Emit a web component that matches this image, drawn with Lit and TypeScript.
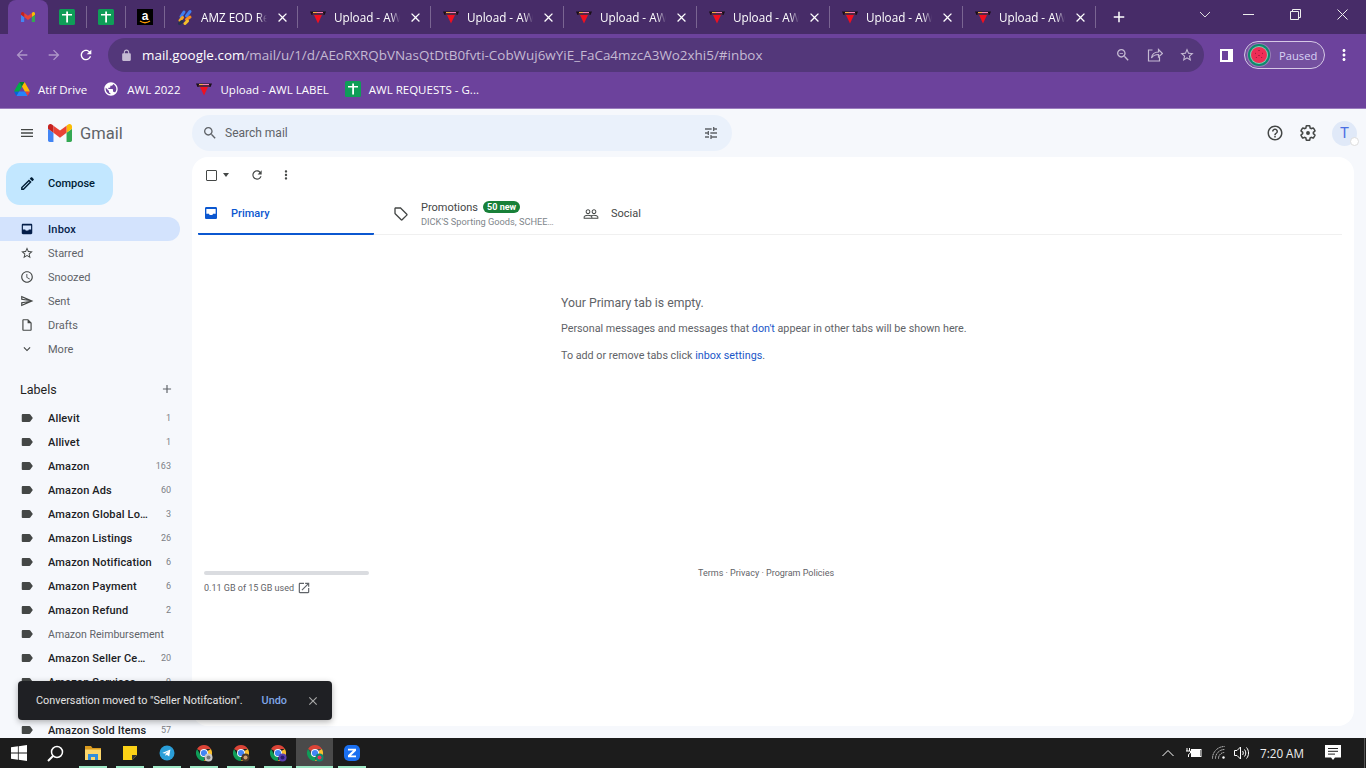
import { LitElement, html, css } from 'lit';
import { customElement } from 'lit/decorators.js';

const P = {
  back: 'M20 11H7.83l5.59-5.59L12 4l-8 8 8 8 1.41-1.41L7.83 13H20v-2z',
  forward: 'M12 4l-1.41 1.41L16.17 11H4v2h12.17l-5.58 5.59L12 20l8-8z',
  reload: 'M17.65 6.35C16.2 4.9 14.21 4 12 4c-4.42 0-7.99 3.58-7.99 8s3.57 8 7.99 8c3.73 0 6.84-2.55 7.73-6h-2.08c-.82 2.33-3.04 4-5.65 4-3.31 0-6-2.69-6-6s2.69-6 6-6c1.66 0 3.14.69 4.22 1.78L13 11h7V4l-2.35 2.35z',
  lock: 'M18 8h-1V6c0-2.76-2.24-5-5-5S7 3.24 7 6v2H6c-1.1 0-2 .9-2 2v10c0 1.1.9 2 2 2h12c1.1 0 2-.9 2-2V10c0-1.1-.9-2-2-2zM9 6c0-1.66 1.34-3 3-3s3 1.34 3 3v2H9V6z',
  close: 'M19 6.41L17.59 5 12 10.59 6.41 5 5 6.41 10.59 12 5 17.59 6.41 19 12 13.41 17.59 19 19 17.59 13.41 12z',
  add: 'M19 13h-6v6h-2v-6H5v-2h6V5h2v6h6v2z',
  star: 'M22 9.24l-7.19-.62L12 2 9.19 8.63 2 9.24l5.46 4.73L5.82 21 12 17.27 18.18 21l-1.63-7.03L22 9.24zM12 15.4l-3.76 2.27 1-4.28-3.32-2.88 4.38-.38L12 6.1l1.71 4.04 4.38.38-3.32 2.88 1 4.28L12 15.4z',
  globe: 'M12 2C6.48 2 2 6.48 2 12s4.48 10 10 10 10-4.48 10-10S17.52 2 12 2zm-1 17.93c-3.95-.49-7-3.85-7-7.93 0-.62.08-1.21.21-1.79L9 15v1c0 1.1.9 2 2 2v1.93zm6.9-2.54c-.26-.81-1-1.39-1.9-1.39h-1v-3c0-.55-.45-1-1-1H8v-2h2c.55 0 1-.45 1-1V7h2c1.1 0 2-.9 2-2v-.41c2.93 1.19 5 4.06 5 7.41 0 2.08-.8 3.97-2.1 5.39z',
  menu: 'M3 18h18v-2H3v2zm0-5h18v-2H3v2zm0-7v2h18V6H3z',
  search: 'M15.5 14h-.79l-.28-.27C15.41 12.59 16 11.11 16 9.5 16 5.91 13.09 3 9.5 3S3 5.91 3 9.5 5.91 16 9.5 16c1.61 0 3.09-.59 4.23-1.57l.27.28v.79l5 4.99L20.49 19l-4.99-5zm-6 0C7.01 14 5 11.99 5 9.5S7.01 5 9.5 5 14 7.01 14 9.5 11.99 14 9.5 14z',
  zoomOut: 'M15.5 14h-.79l-.28-.27C15.41 12.59 16 11.11 16 9.5 16 5.91 13.09 3 9.5 3S3 5.91 3 9.5 5.91 16 9.5 16c1.61 0 3.09-.59 4.23-1.57l.27.28v.79l5 4.99L20.49 19l-4.99-5zm-6 0C7.01 14 5 11.99 5 9.5S7.01 5 9.5 5 14 7.01 14 9.5 11.99 14 9.5 14zM7 9h5v1H7z',
  tune: 'M3 17v2h6v-2H3zM3 5v2h10V5H3zm10 16v-2h8v-2h-8v-2h-2v6h2zM7 9v2H3v2h4v2h2V9H7zm14 4v-2H11v2h10zm-6-4h2V7h4V5h-4V3h-2v6z',
  help: 'M11 18h2v-2h-2v2zm1-16C6.48 2 2 6.48 2 12s4.48 10 10 10 10-4.48 10-10S17.52 2 12 2zm0 18c-4.41 0-8-3.59-8-8s3.59-8 8-8 8 3.59 8 8-3.59 8-8 8zm0-14c-2.21 0-4 1.79-4 4h2c0-1.1.9-2 2-2s2 .9 2 2c0 2-3 1.75-3 5h2c0-2.25 3-2.5 3-5 0-2.21-1.79-4-4-4z',
  gear: 'M19.14 12.94c.04-.3.06-.61.06-.94 0-.32-.02-.64-.07-.94l2.03-1.58c.18-.14.23-.41.12-.61l-1.92-3.32c-.12-.22-.37-.29-.59-.22l-2.39.96c-.5-.38-1.03-.7-1.62-.94l-.36-2.54c-.04-.24-.24-.41-.48-.41h-3.84c-.24 0-.43.17-.47.41l-.36 2.54c-.59.24-1.13.57-1.62.94l-2.39-.96c-.22-.08-.47 0-.59.22L2.74 8.87c-.12.21-.08.47.12.61l2.03 1.58c-.05.3-.09.63-.09.94s.02.64.07.94l-2.03 1.58c-.18.14-.23.41-.12.61l1.92 3.32c.12.22.37.29.59.22l2.39-.96c.5.38 1.03.7 1.62.94l.36 2.54c.05.24.24.41.48.41h3.84c.24 0 .44-.17.47-.41l.36-2.54c.59-.24 1.13-.56 1.62-.94l2.39.96c.22.08.47 0 .59-.22l1.92-3.32c.12-.22.07-.47-.12-.61l-2.01-1.58z',
  edit: 'M14.06 9.02l.92.92L5.92 19H5v-.92l9.06-9.06M17.66 3c-.25 0-.51.1-.7.29l-1.83 1.83 3.75 3.75 1.83-1.83c.39-.39.39-1.02 0-1.41l-2.34-2.34c-.2-.2-.45-.29-.71-.29zm-3.6 3.19L3 17.25V21h3.75L17.81 9.94l-3.75-3.75z',
  inbox: 'M19 3H5c-1.1 0-2 .9-2 2v14c0 1.1.9 2 2 2h14c1.1 0 2-.9 2-2V5c0-1.1-.9-2-2-2zm0 10h-4c0 1.66-1.35 2-3 2s-3-.34-3-2H5V6h14z',
  clock: 'M11.99 2C6.47 2 2 6.48 2 12s4.47 10 9.99 10C17.52 22 22 17.52 22 12S17.52 2 11.99 2zM12 20c-4.42 0-8-3.58-8-8s3.58-8 8-8 8 3.58 8 8-3.58 8-8 8zm.5-13H11v6l5.25 3.15.75-1.23-4.5-2.67z',
  send: 'M4.01 6.03l7.51 3.22-7.52-1 .01-2.22m7.5 8.72L4 17.97v-2.22l7.51-1M2.01 3L2 10l15 2-15 2 .01 7L23 12 2.01 3z',
  draft: 'M14 2H6c-1.1 0-1.99.9-1.99 2L4 20c0 1.1.89 2 1.99 2H18c1.1 0 2-.9 2-2V8l-6-6zM6 20V4h7v5h5v11H6z',
  more: 'M16.59 8.59L12 13.17 7.41 8.59 6 10l6 6 6-6z',
  label: 'M17.63 5.84C17.27 5.33 16.67 5 16 5L5 5.01C3.9 5.01 3 5.9 3 7v10c0 1.1.9 1.99 2 1.99L16 19c.67 0 1.27-.33 1.63-.84L22 12l-4.37-6.16z',
  tag: 'M21.41 11.58l-9-9C12.05 2.22 11.55 2 11 2H4c-1.1 0-2 .9-2 2v7c0 .55.22 1.05.59 1.42l9 9c.36.36.86.58 1.41.58s1.05-.22 1.41-.59l7-7c.37-.36.59-.86.59-1.41s-.23-1.06-.59-1.42zM13 20.01L4 11V4h7v-.01l9 9-7 7.02z',
  people: 'M16.5 13c-1.2 0-3.07.34-4.5 1-1.43-.67-3.3-1-4.5-1C5.33 13 1 14.08 1 16.25V19h22v-2.75c0-2.17-4.33-3.25-6.5-3.25zm-4 4.5h-10v-1.25c0-.54 2.56-1.75 5-1.75s5 1.21 5 1.75v1.25zm9 0H14v-1.25c0-.46-.2-.86-.52-1.22.88-.3 1.96-.53 3.02-.53 2.44 0 5 1.21 5 1.75v1.25zM7.5 12c1.93 0 3.5-1.57 3.5-3.5S9.43 5 7.5 5 4 6.57 4 8.5 5.57 12 7.5 12zm0-5.5c1.1 0 2 .9 2 2s-.9 2-2 2-2-.9-2-2 .9-2 2-2zm9 5.5c1.93 0 3.5-1.57 3.5-3.5S18.43 5 16.5 5 13 6.57 13 8.5s1.57 3.5 3.5 3.5zm0-5.5c1.1 0 2 .9 2 2s-.9 2-2 2-2-.9-2-2 .9-2 2-2z',
  dots: 'M12 8c1.1 0 2-.9 2-2s-.9-2-2-2-2 .9-2 2 .9 2 2 2zm0 2c-1.1 0-2 .9-2 2s.9 2 2 2 2-.9 2-2-.9-2-2-2zm0 6c-1.1 0-2 .9-2 2s.9 2 2 2 2-.9 2-2-.9-2-2-2z',
  open: 'M19 19H5V5h7V3H5c-1.11 0-2 .9-2 2v14c0 1.1.89 2 2 2h14c1.1 0 2-.9 2-2v-7h-2v7zM14 3v2h3.59l-9.83 9.83 1.41 1.41L19 6.41V10h2V3h-7z',
};

const ic = (d: string, size = 16) => html`<svg class="ic" width=${size} height=${size} viewBox="0 0 24 24" fill="currentColor"><path d=${d}></path></svg>`;

const gearOutline = (size = 18) => html`<svg class="ic" width=${size} height=${size} viewBox="0 0 24 24" fill="none" stroke="currentColor" stroke-width="2"><path d=${P.gear}></path><circle cx="12" cy="12" r="2.600" fill="currentColor" stroke="none"></circle></svg>`;

const gmailM = (size = 16) => html`<svg class="ic" width=${size} height=${size * 0.75} viewBox="52 42 88 66">
  <path fill="#4285f4" d="M58 108h14V74L52 59v43c0 3.32 2.69 6 6 6"/>
  <path fill="#34a853" d="M120 108h14c3.32 0 6-2.69 6-6V59l-20 15"/>
  <path fill="#fbbc04" d="M120 48v26l20-15v-8c0-7.42-8.47-11.65-14.4-7.2"/>
  <path fill="#ea4335" d="M72 74V48l24 18 24-18v26L96 92"/>
  <path fill="#c5221f" d="M52 51v8l20 15V48l-5.6-4.2c-5.94-4.45-14.4-.22-14.4 7.2"/>
</svg>`;

const sheet = () => html`<svg class="ic" width="16" height="16" viewBox="0 0 16 16">
  <rect width="16" height="16" rx="1.5" fill="#0f9d58"/>
  <path d="M3 5h10v1.6H9v7H7.2v-7H3z" fill="#fff"/><path d="M7.2 2.5H9V5H7.2z" fill="#fff"/>
</svg>`;

const awl = () => html`<svg class="ic" width="16" height="16" viewBox="0 0 16 16">
  <path d="M0 2.500h16L14.500 6h-13z" fill="#1a1018"/>
  <path d="M3 3.500h4" stroke="#f0b040" stroke-width="1"/>
  <path d="M7 3.500h6" stroke="#f47ab0" stroke-width="1"/>
  <path d="M2.500 5h11" stroke="#b04a80" stroke-width=".8"/>
  <path d="M4 6h8L8 14.500z" fill="#f01020"/>
</svg>`;

const amazon = () => html`<svg class="ic" width="16" height="16" viewBox="0 0 16 16">
  <rect width="16" height="16" fill="#000"/>
  <text x="8" y="10.5" text-anchor="middle" font-family="Liberation Sans" font-weight="700" font-size="12" fill="#fff">a</text>
  <path d="M3 12c3 2 7 2 10 0" fill="none" stroke="#f90" stroke-width="1.4"/>
</svg>`;

const eod = () => html`<svg class="ic" width="16" height="16" viewBox="0 0 16 16" fill="none" stroke-width="3" stroke-linecap="round">
  <path d="M13 2.500 9.500 7" stroke="#3f7df0"/>
  <path d="M7 3 4 7.500" stroke="#3f7df0"/>
  <path d="M13 8 9.500 10.500" stroke="#f58a1f"/>
  <path d="M3 11.500 5.500 8.500" stroke="#f5a623"/>
  <path d="M2.500 14.500 5 12.500" stroke="#26324f"/>
  <path d="M8 14.500 10.500 12" stroke="#f5c02a"/>
</svg>`;

const drive = () => html`<svg class="ic" width="16" height="14" viewBox="0 0 87.3 78">
  <path d="m6.6 66.85 3.85 6.65c.8 1.4 1.95 2.5 3.3 3.3l13.75-23.8h-27.5c0 1.55.4 3.1 1.2 4.5z" fill="#0066da"/>
  <path d="m43.65 25-13.75-23.8c-1.35.8-2.5 1.9-3.3 3.3l-25.4 44a9.06 9.06 0 0 0 -1.2 4.5h27.5z" fill="#00ac47"/>
  <path d="m73.55 76.8c1.35-.8 2.5-1.9 3.3-3.3l1.6-2.75 7.65-13.25c.8-1.4 1.2-2.95 1.2-4.5h-27.502l5.852 11.5z" fill="#ea4335"/>
  <path d="m43.65 25 13.75-23.8c-1.35-.8-2.9-1.2-4.5-1.2h-18.5c-1.6 0-3.15.45-4.5 1.2z" fill="#00832d"/>
  <path d="m59.8 53h-32.3l-13.75 23.8c1.35.8 2.9 1.2 4.5 1.2h50.8c1.6 0 3.15-.45 4.5-1.2z" fill="#2684fc"/>
  <path d="m73.4 26.5-12.7-22c-.8-1.4-1.95-2.5-3.3-3.3l-13.75 23.8 16.15 28h27.45c0-1.55-.4-3.1-1.2-4.5z" fill="#ffba00"/>
</svg>`;

const chrome = (badge: string, dot: string) => html`<svg class="ic" width="18" height="18" viewBox="0 0 18 18">
  <path d="M9 1a8 8 0 0 1 6.93 4H9a4 4 0 0 0-3.46 2L2.07 5A8 8 0 0 1 9 1z" fill="#db4437"/>
  <path d="M15.93 5A8 8 0 0 1 9 17l3.46-6A4 4 0 0 0 12.46 7z" fill="#fbc02d"/>
  <path d="M9 17A8 8 0 0 1 2.07 5l3.47 6A4 4 0 0 0 9 13z" fill="#0f9d58"/>
  <circle cx="9" cy="9" r="4" fill="#fff"/><circle cx="9" cy="9" r="3.1" fill="#4285f4"/>
  <circle cx="13.5" cy="13.5" r="4" fill=${badge}/><circle cx="13.5" cy="13.5" r="2" fill=${dot}/>
</svg>`;

const winLogo = () => html`<svg class="ic" width="16" height="16" viewBox="0 0 16 16" fill="#fff">
  <path d="M0 2.3 6.9 1.3V7.6H0zM7.7 1.2 16 0V7.6H7.7zM0 8.4H6.9V14.7L0 13.7zM7.7 8.4H16V16L7.7 14.8z"/>
</svg>`;

const winSearch = () => html`<svg class="ic" width="17" height="17" viewBox="0 0 17 17" fill="none" stroke="#fff" stroke-width="1.5">
  <circle cx="10" cy="7" r="5.5"/><path d="M6 11 1 16" stroke-width="2"/>
</svg>`;

const explorer = () => html`<svg class="ic" width="16" height="14" viewBox="0 0 16 14">
  <path d="M0 0h6l1.500 2H16v12H0z" fill="#d99a1e"/>
  <path d="M0 3.500h16V14H0z" fill="#fbd66b"/>
  <path d="M3 8h10v6h-3v-3H6v3H3z" fill="#2f8ddb"/>
</svg>`;

const sticky = () => html`<svg class="ic" width="14" height="14" viewBox="0 0 14 14">
  <path d="M0 0h14v9l-5 5H0z" fill="#fcd116"/><path d="M9 14V9h5z" fill="#333"/>
</svg>`;

const telegram = () => html`<svg class="ic" width="16" height="16" viewBox="0 0 16 16">
  <circle cx="8" cy="8" r="7.5" fill="#2a9ed8"/>
  <path d="M3.2 7.9 11.4 4.6 10.2 11.6 7.7 9.8 6.6 10.9 6.4 8.8 10 5.9 5.5 8.6z" fill="#fff"/>
</svg>`;

const zoomApp = () => html`<svg class="ic" width="16" height="16" viewBox="0 0 16 16">
  <rect width="16" height="16" rx="5" fill="#1a6ff0"/>
  <path d="M4 3.8h8v1.9L7 10.4h5v1.8H4v-1.9L9 5.6H4z" fill="#fff"/>
</svg>`;

const chevronUp = () => html`<svg class="ic" width="12" height="8" viewBox="0 0 12 8" fill="none" stroke="#fff" stroke-width="1"><path d="M.5 7 6 1.5 11.5 7"/></svg>`;

const battery = () => html`<svg class="ic" width="16" height="12" viewBox="0 0 16 12" fill="none" stroke="#fff">
  <path d="M1 1v3M3.5 1v3" /><path d="M0 4h4.500v2L2.500 7.500 2.500 10" />
  <rect x="5.500" y="2.500" width="9.500" height="7"/><rect x="6" y="3" width="8" height="6" fill="#fff" stroke="none"/>
</svg>`;

const wifi = () => html`<svg class="ic" width="14" height="14" viewBox="0 0 14 14" fill="none" stroke="#ddd" stroke-dasharray="1.2 .6">
  <path d="M.5 12.500A12 12 0 0 1 12.500 .5"/><path d="M3.500 12.500A9 9 0 0 1 12.500 3.500"/><path d="M6.500 12.500A6 6 0 0 1 12.500 6.500"/>
  <circle cx="11.500" cy="11.500" r="1.200" fill="#fff" stroke="none"/>
</svg>`;

const volume = () => html`<svg class="ic" width="16" height="14" viewBox="0 0 16 14" fill="none" stroke="#fff">
  <path d="M.5 4.500H3L6.500 1v12L3 9.500H.5z"/><path d="M8.500 5c1 1 1 3 0 4"/><path d="M10.500 3.500c1.700 2 1.700 5 0 7"/><path d="M12.500 1.500c2.700 3 2.700 8 0 11"/>
</svg>`;

const notif = () => html`<svg class="ic" width="16" height="16" viewBox="0 0 16 16">
  <path d="M0 0h16v12.500H10L8 15 6 12.500H0z" fill="#fff"/>
  <path d="M3 3.500h10M3 6.300h10M3 9.100h7" stroke="#222" stroke-width="1"/>
</svg>`;

const LABELS: [string, string, boolean][] = [
  ['Allevit', '1', true], ['Allivet', '1', true], ['Amazon', '163', true], ['Amazon Ads', '60', true],
  ['Amazon Global Logistics', '3', true], ['Amazon Listings', '26', true], ['Amazon Notification', '6', true],
  ['Amazon Payment', '6', true], ['Amazon Refund', '2', true], ['Amazon Reimbursement', '', false],
  ['Amazon Seller Central', '20', true], ['Amazon Services', '9', true], ['Amazon Shipment', '4', true],
  ['Amazon Sold Items', '57', true],
];

const NAV: [string, string, boolean][] = [
  [P.inbox, 'Inbox', true], [P.star, 'Starred', false], [P.clock, 'Snoozed', false],
  [P.send, 'Sent', false], [P.draft, 'Drafts', false], [P.more, 'More', false],
];

@customElement('app-root')
export class AppRoot extends LitElement {
  static styles = css`
    :host { display: flex; flex-direction: column; width: 1366px; height: 768px; overflow: hidden; font-family: Roboto, sans-serif; color: #444746; position: relative; }
    .ic { display: block; flex: none; }

    .strip { height: 34px; flex: none; background: #472c68; display: flex; align-items: stretch; padding-left: 8px; color: #fff; font: 11.700px "Open Sans", sans-serif; }
    .pin { width: 39px; box-sizing: border-box; display: flex; align-items: center; justify-content: center; }
    .pin.active { width: 40px; background: #6c429c; border-radius: 8px 8px 0 0; }
    .pin.sep, .tab { border-right: 1px solid #7a6592; }
    .pin.sep, .tab { border-image: linear-gradient(transparent 7px, #7a6592 7px, #7a6592 27px, transparent 27px) 1; }
    .tab { width: 133px; box-sizing: border-box; display: flex; align-items: center; padding: 0 7px 0 12px; gap: 8px; }
    .title { flex: 1; min-width: 0; white-space: nowrap; overflow: hidden; -webkit-mask-image: linear-gradient(90deg, #000 86%, transparent 100%); mask-image: linear-gradient(90deg, #000 86%, transparent 100%); }
    .plus { margin-left: 14px; align-self: center; }
    .win { margin-left: auto; display: flex; align-items: center; color: #eee; height: 29px; }
    .win span { width: 47px; display: flex; justify-content: center; }
    .win span:first-child { margin-right: -3px; }

    .bar { height: 40px; flex: none; box-sizing: border-box; padding: 2px 0 0 14px; background: #6c429c; display: flex; align-items: center; color: #fff; }
    .nav { display: flex; gap: 16px; margin-right: 14px; }
    .nav .off { opacity: .45; }
    .omni { width: 1096px; height: 34px; box-sizing: border-box; background: #53377a; border-radius: 17px; display: flex; align-items: center; padding: 0 9px 0 12px; color: #c5bad3; font: 13.450px "Open Sans", sans-serif; }
    .url { margin-left: 9px; flex: 1; white-space: nowrap; }
    .url b { font-weight: 400; color: #fff; }
    .omni-ic { display: flex; gap: 16px; }
    .panel { width: 6px; height: 9px; border: 2px solid #fff; border-right-width: 5px; margin-left: 16px; background: #6c429c; }
    .pill { margin-left: 11px; width: 81px; height: 28px; box-sizing: border-box; border: 1px solid #d6c9e6; border-radius: 14px; background: #74509f; display: flex; align-items: center; gap: 8px; padding-left: 2px; font: 11.200px "Open Sans", sans-serif; color: #d9d2f5; }
    .kebab { margin-left: 10px; }

    .marks { height: 34px; flex: none; box-sizing: border-box; background: #6c429c; display: flex; align-items: center; gap: 16px; padding: 0 0 4px 14px; color: #fff; font: 11.500px "Open Sans", sans-serif; }
    .mark { display: flex; align-items: center; gap: 8px; }
    .line { height: 1px; flex: none; background: #9a7cbd; }

    .gm { flex: 1; min-height: 0; background: #f6f8fc; display: flex; flex-direction: column; position: relative; overflow: hidden; }
    .gm-head { height: 48px; flex: none; display: flex; align-items: center; padding-left: 19px; }
    .logo { display: flex; align-items: center; gap: 8px; margin-left: 13px; width: 144px; font-size: 16.500px; color: #5f6368; }
    .searchbox { width: 540px; height: 36px; box-sizing: border-box; border-radius: 18px; background: #eaf1fb; display: flex; align-items: center; padding: 0 13px 0 10px; gap: 7px; font-size: 12px; color: #5f6368; }
    .searchbox span { flex: 1; }
    .actions { margin-left: auto; display: flex; align-items: center; color: #444746; }
    .actions .ic + .ic { margin-left: 15px; }
    .avatar { width: 25px; height: 25px; margin: 0 9px 0 15px; border-radius: 50%; background: #e0e9f8; color: #4a6fe3; display: flex; align-items: center; justify-content: center; font-size: 15px; position: relative; }
    .avatar i { position: absolute; right: -2px; bottom: 0; width: 9px; height: 9px; border-radius: 50%; background: #fff; border: 1px solid #ddd; box-sizing: border-box; }

    .gm-body { flex: 1; min-height: 0; display: flex; }
    .side { width: 192px; flex: none; overflow: hidden; font-size: 11px; color: #5f6368; }
    .compose { margin: 6px 0 12px 6px; width: 107px; height: 42px; padding-bottom: 1px; border-radius: 14px; background: #c2e7ff; display: flex; align-items: center; gap: 12px; padding-left: 13px; box-sizing: border-box; color: #001d35; font-weight: 500; }
    .row { width: 180px; height: 24px; box-sizing: border-box; display: flex; align-items: center; padding: 0 9px 0 20px; gap: 14px; border-radius: 0 12px 12px 0; color: #5f6368; }
    .row.cur { background: #d3e3fd; color: #041e49; font-weight: 500; }
    .row.cur .name { letter-spacing: .2px; }
    .row .ic { color: #444746; }
    .row.cur .ic { color: #041e49; }
    .row.plain .name { font-size: 10.550px; }
    .labels-head { display: flex; align-items: center; justify-content: space-between; width: 180px; box-sizing: border-box; padding: 0 6px 0 20px; margin: 16px 0 5px; height: 24px; font-size: 12.500px; color: #1f1f1f; }
    .labels-head .ic { color: #5f6368; }
    .name { flex: 1; min-width: 0; white-space: nowrap; overflow: hidden; text-overflow: ellipsis; }
    .row.bold .name { font-weight: 500; color: #202124; letter-spacing: .15px; }
    .count { font-size: 9px; color: #7c8085; margin-left: -2px; }

    .main { flex: 1; margin: 0 12px 12px 0; background: #fff; border-radius: 16px; min-width: 0; }
    .tools { height: 36px; display: flex; align-items: center; padding-left: 12px; color: #444746; }
    .check { width: 9px; height: 9px; border: 1.500px solid #444746; border-radius: 1px; margin-left: 2px; }
    .caret { width: 0; height: 0; border: 3.500px solid transparent; border-top: 4px solid #444746; border-bottom: 0; margin: 0 0 0 6px; }
    .tools .refresh { margin-left: 21px; }
    .tools .dot3 { margin-left: 15px; }
    .tabs { height: 42px; margin: 0 12px 0 6px; box-sizing: border-box; display: flex; border-bottom: 1px solid #f0f0f0; font-size: 11px; color: #444746; }
    .gtab { display: flex; align-items: center; gap: 12px; box-sizing: border-box; padding-left: 19px; }
    .gtab.on { width: 176px; padding-left: 5px; color: #0b57d0; font-weight: 500; border-bottom: 2px solid #0b57d0; border-radius: 0 0 1px 1px; height: 42px; }
    .gtab.promo { width: 190px; }
    .promo-top { display: flex; align-items: center; gap: 5px; }
    .chip { background: #188038; color: #fff; font-size: 9px; font-weight: 700; border-radius: 6px; padding: 0 4px; line-height: 12px; }
    .promo-sub { font-size: 9.250px; color: #80868b; margin-top: 2px; width: 134px; white-space: nowrap; overflow: hidden; text-overflow: ellipsis; }

    .empty { margin: 60px 0 0 369px; color: #5f6368; font-size: 10.750px; line-height: 14px; }
    .empty h2 { margin: 0 0 11px; font-weight: 400; font-size: 12.250px; line-height: 16px; }
    .empty p { margin: 0 0 13px; }
    .empty a { color: #1a57c8; }

    .foot { display: flex; margin-top: 204px; font-size: 9px; color: #5f6368; line-height: 12px; }
    .quota { margin-left: 12px; width: 165px; padding-top: 4px; }
    .quota-bar { height: 4px; border-radius: 2px; background: #dadce0; }
    .quota-text { display: flex; align-items: center; gap: 3px; margin-top: 6px; height: 14px; }
    .terms { margin-left: 329px; }

    .toast { position: absolute; left: 18px; bottom: 18px; width: 314px; height: 39px; box-sizing: border-box; background: #1f2024; border-radius: 4px; box-shadow: 0 2px 6px rgba(0,0,0,.3); color: #e3e3e3; display: flex; align-items: center; padding: 0 12px 0 18px; font-size: 10.850px; }
    .toast span { flex: 1; }
    .toast a { color: #7fa7e8; font-weight: 500; margin-right: 19px; font-size: 10.850px; }
    .toast .ic { color: #a8a8a8; }

    .task { height: 30px; flex: none; background: #1c1c1c; display: flex; align-items: stretch; color: #fff; }
    .cell { width: 37px; display: flex; align-items: center; justify-content: center; }
    .cell.app { background: linear-gradient(#9fe8c6, #9fe8c6) center bottom / 28px 2px no-repeat; }
    .cell.app.live { background: linear-gradient(#9fe8c6, #9fe8c6) center bottom / 100% 2px no-repeat, #4a4a4a; }
    .tray { margin-left: auto; display: flex; align-items: center; font: 11.700px "Open Sans", sans-serif; color: #eee; }
    .tray div { display: flex; justify-content: center; }
    .t-up { width: 26px; } .t-bat { width: 25px; } .t-wifi { width: 25px; } .t-vol { width: 22px; }
    .t-time { width: 56px; padding-left: 2px; box-sizing: border-box; white-space: nowrap; }
    .t-note { width: 48px; }
    .t-end { width: 9px; align-self: stretch; justify-content: flex-start; }
    .t-end i { display: block; width: 1px; margin-left: 5px; background: #555; }
  `;

  render() {
    return html`
      <div class="strip">
        <div class="pin active">${gmailM(14)}</div>
        <div class="pin sep">${sheet()}</div>
        <div class="pin sep">${sheet()}</div>
        <div class="pin sep">${amazon()}</div>
        ${this.tab(eod(), 'AMZ EOD Report')}
        ${[1, 2, 3, 4, 5, 6].map(() => this.tab(awl(), 'Upload - AWL LABEL'))}
        <span class="plus">${ic(P.add, 18)}</span>
        <div class="win">
          <span>${html`<svg class="ic" width="12" height="7" viewBox="0 0 12 7" fill="none" stroke="#ddd"><path d="M1 1l5 5 5-5"/></svg>`}</span>
          <span>${html`<svg class="ic" width="11" height="1" viewBox="0 0 11 1"><path d="M0 0h11v1H0z" fill="#eee"/></svg>`}</span>
          <span>${html`<svg class="ic" width="11" height="11" viewBox="0 0 11 11" fill="none" stroke="#eee"><path d="M.5 2.500h8v8h-8zM2.500 2.500v-2h8v8h-2"/></svg>`}</span>
          <span>${html`<svg class="ic" width="11" height="11" viewBox="0 0 11 11" fill="none" stroke="#eee"><path d="M.5.5l10 10M10.500.5l-10 10"/></svg>`}</span>
        </div>
      </div>

      <div class="bar">
        <div class="nav">
          <span class="off">${ic(P.back, 16)}</span>
          <span class="off">${ic(P.forward, 16)}</span>
          <span>${ic(P.reload, 16)}</span>
        </div>
        <div class="omni">
          ${ic(P.lock, 13)}
          <span class="url"><b>mail.google.com</b>/mail/u/1/d/AEoRXRQbVNasQtDtB0fvti-CobWuj6wYiE_FaCa4mzcA3Wo2xhi5/#inbox</span>
          <div class="omni-ic">
            ${ic(P.zoomOut, 16)}
            ${html`<svg class="ic" width="16" height="16" viewBox="0 0 16 16" fill="none" stroke="currentColor" stroke-width="1.200"><path d="M5.500 3H1.500v11h11V10"/><path d="M4.500 11c.5-4 3-6 7-6V2.500L15.500 6.500 11.500 10V7.500c-3 0-5.500 1-7 3.500z"/></svg>`}
            ${ic(P.star, 16)}
          </div>
        </div>
        <div class="panel"></div>
        <div class="pill">
          <svg class="ic" width="24" height="24" viewBox="0 0 24 24">
            <circle cx="12" cy="12" r="12" fill="#fff" opacity=".25"/>
            <circle cx="12" cy="12" r="11" fill="#0d8a6c"/>
            <circle cx="12" cy="12" r="9" fill="#7fd4b4"/>
            <circle cx="12" cy="12" r="8" fill="#ef2d56"/>
            <path d="M12 7v1M8 10l.7.5M16 10l-.7.5M9 15l.5-.7M15 15l-.5-.7M12 12v1" stroke="#7a1030" stroke-width="1"/>
          </svg>
          Paused
        </div>
        <span class="kebab">${ic(P.dots, 18)}</span>
      </div>

      <div class="marks">
        <div class="mark">${drive()}Atif Drive</div>
        <div class="mark">${ic(P.globe, 16)}AWL 2022</div>
        <div class="mark">${awl()}Upload - AWL LABEL</div>
        <div class="mark">${sheet()}AWL REQUESTS - G...</div>
      </div>
      <div class="line"></div>

      <div class="gm">
        <div class="gm-head">
          ${ic(P.menu, 16)}
          <div class="logo">${gmailM(24)}Gmail</div>
          <div class="searchbox">
            ${ic(P.search, 16)}<span>Search mail</span>${ic(P.tune, 16)}
          </div>
          <div class="actions">
            ${ic(P.help, 18)}
            ${gearOutline(18)}
            <div class="avatar">T<i></i></div>
          </div>
        </div>
        <div class="gm-body">
          <div class="side">
            <div class="compose">${ic(P.edit, 17)}Compose</div>
            ${NAV.map(([d, t, cur]) => html`<div class="row ${cur ? 'cur' : ''}">${ic(d, 14)}<span class="name">${t}</span></div>`)}
            <div class="labels-head">Labels ${ic(P.add, 14)}</div>
            ${LABELS.map(([n, c, b]) => html`<div class="row ${b ? 'bold' : 'plain'}">${ic(P.label, 14)}<span class="name">${n}</span>${c ? html`<span class="count">${c}</span>` : ''}</div>`)}
          </div>
          <div class="main">
            <div class="tools">
              <span class="check"></span><span class="caret"></span>
              <span class="refresh">${ic(P.reload, 14)}</span>
              <span class="dot3">${ic(P.dots, 14)}</span>
            </div>
            <div class="tabs">
              <div class="gtab on">${ic(P.inbox, 16)}Primary</div>
              <div class="gtab promo">
                ${ic(P.tag, 16)}
                <div>
                  <div class="promo-top">Promotions <span class="chip">50 new</span></div>
                  <div class="promo-sub">DICK'S Sporting Goods, SCHEELS, Nike</div>
                </div>
              </div>
              <div class="gtab">${ic(P.people, 16)}Social</div>
            </div>
            <div class="empty">
              <h2>Your Primary tab is empty.</h2>
              <p>Personal messages and messages that <a>don't</a> appear in other tabs will be shown here.</p>
              <p>To add or remove tabs click <a>inbox settings</a>.</p>
            </div>
            <div class="foot">
              <div class="quota">
                <div class="quota-bar"></div>
                <div class="quota-text">0.11 GB of 15 GB used ${ic(P.open, 14)}</div>
              </div>
              <div class="terms">Terms · Privacy · Program Policies</div>
            </div>
          </div>
        </div>
        <div class="toast">
          <span>Conversation moved to "Seller Notifcation".</span>
          <a>Undo</a>
          ${ic(P.close, 14)}
        </div>
      </div>

      <div class="task">
        <div class="cell">${winLogo()}</div>
        <div class="cell">${winSearch()}</div>
        <div class="cell app">${explorer()}</div>
        <div class="cell app">${sticky()}</div>
        <div class="cell app">${telegram()}</div>
        <div class="cell app">${chrome('#c9c9c9', '#777')}</div>
        <div class="cell app">${chrome('#4a3a2a', '#d0a070')}</div>
        <div class="cell app">${chrome('#5b3fb0', '#2a1a70')}</div>
        <div class="cell app live">${chrome('#0d8a6c', '#ef2d56')}</div>
        <div class="cell app">${zoomApp()}</div>
        <div class="tray">
          <div class="t-up">${chevronUp()}</div>
          <div class="t-bat">${battery()}</div>
          <div class="t-wifi">${wifi()}</div>
          <div class="t-vol">${volume()}</div>
          <div class="t-time">7:20 AM</div>
          <div class="t-note">${notif()}</div>
          <div class="t-end"><i></i></div>
        </div>
      </div>
    `;
  }

  tab(icon: unknown, title: string) {
    return html`<div class="tab">${icon}<span class="title">${title}</span>${ic(P.close, 15)}</div>`;
  }
}
